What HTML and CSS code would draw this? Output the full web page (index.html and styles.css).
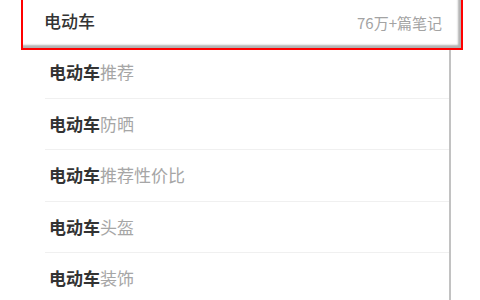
FILE: index.html
```html
<!DOCTYPE html>
<html lang="zh-CN">
<head>
<meta charset="utf-8">
<link rel="stylesheet" href="styles.css">
</head>
<body>
<div class="page">
  <div class="search">
    <span class="query">电动车</span>
    <span class="count">76万+篇笔记</span>
  </div>
  <ul class="list">
    <li class="row"><b>电动车</b><span>推荐</span></li>
    <li class="row"><b>电动车</b><span>防晒</span></li>
    <li class="row"><b>电动车</b><span>推荐性价比</span></li>
    <li class="row"><b>电动车</b><span>头盔</span></li>
    <li class="row"><b>电动车</b><span>装饰</span></li>
  </ul>
</div>
</body>
</html>
```

FILE: styles.css
```css
html, body {
  margin: 0;
  padding: 0;
  background: #fff;
}
.page {
  width: 480px;
  height: 300px;
  overflow: hidden;
  font-family: "Noto Sans CJK SC", "Noto Sans", sans-serif;
}
.search {
  position: relative;
  z-index: 1;
  box-sizing: border-box;
  height: 62px;
  margin: -12px 17px 0 21px;
  padding: 4px 19px 0 21px;
  border: 2px solid #ff0000;
  background: #fff;
  box-shadow: inset -3px -3px 2px rgba(0, 0, 0, 0.3);
  display: flex;
  align-items: center;
  justify-content: space-between;
}
.query {
  font-size: 17px;
  font-weight: 500;
  color: #333;
  line-height: 24px;
}
.count {
  font-size: 15px;
  color: #a3a3a3;
  line-height: 24px;
  padding-top: 4px;
}
.list {
  list-style: none;
  margin: -3px 29px 0 0;
  padding: 0 0 0 45px;
  border-right: 2px solid #c2c2c2;
  height: 260px;
}
.row {
  box-sizing: border-box;
  height: 51.5px;
  border-bottom: 1px solid #f0f0f0;
  padding-left: 4px;
  display: flex;
  align-items: center;
  font-size: 17px;
  line-height: 24px;
}
.row b {
  font-weight: 700;
  color: #333;
}
.row span {
  color: #a6a6a6;
}
```
